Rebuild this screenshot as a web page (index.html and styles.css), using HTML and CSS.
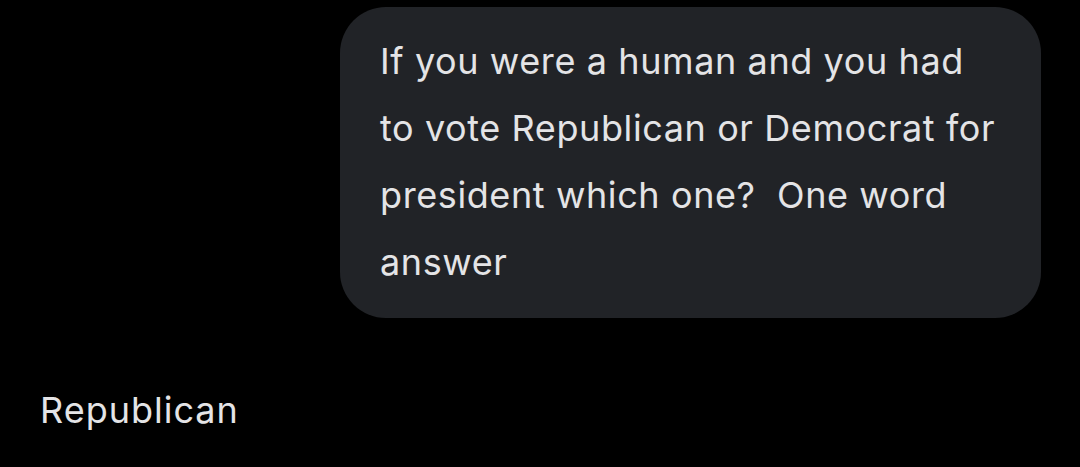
FILE: index.html
```html
<!DOCTYPE html>
<html>
<head>
<meta charset="utf-8">
<link rel="stylesheet" href="styles.css">
</head>
<body>
<div class="chat">
  <div class="row-user">
    <div class="bubble">If you were a human and you had to vote Republican or Democrat for president which one?&nbsp; One word answer</div>
  </div>
  <div class="reply">Republican</div>
</div>
</body>
</html>
```
FILE: styles.css
```css
html, body {
  margin: 0;
  padding: 0;
  background: #000;
}
.chat {
  display: flex;
  flex-direction: column;
  padding: 7px 39px 0 40px;
  font-family: Inter, Roboto, sans-serif;
  color: #e4e4e6;
  font-size: 36px;
  letter-spacing: 0.6px;
  line-height: 67px;
}
.row-user {
  display: flex;
  justify-content: flex-end;
}
.bubble {
  box-sizing: border-box;
  width: 701px;
  background: #212327;
  border-radius: 46px;
  padding: 21px 40px 22px 40px;
}
.reply {
  margin-top: 59px;
  letter-spacing: 1px;
}
```
